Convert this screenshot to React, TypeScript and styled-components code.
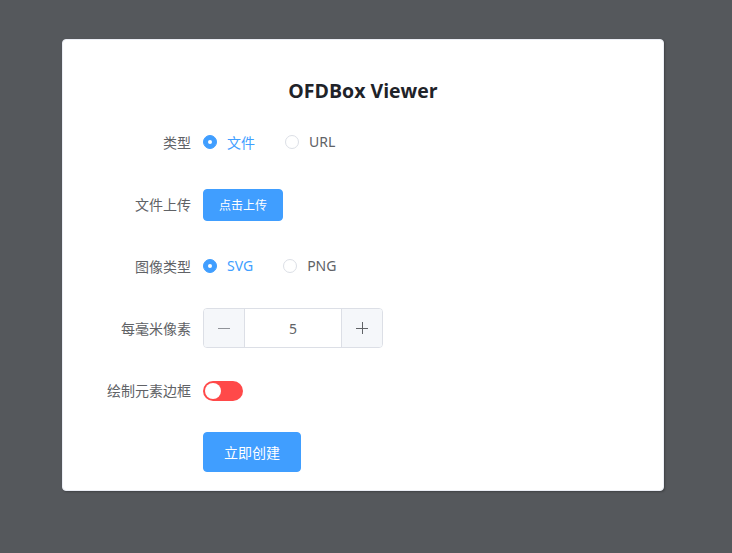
import React, { useState } from "react";
import styled, { createGlobalStyle } from "styled-components";

const Global = createGlobalStyle`
  html, body { margin: 0; padding: 0; }
  body {
    background: #55585c;
    font-family: "Noto Sans", "Noto Sans CJK SC", sans-serif;
    -webkit-font-smoothing: antialiased;
  }
`;

const Page = styled.div`
  width: 732px;
  height: 553px;
  box-sizing: border-box;
  padding: 39px 0 0 62px;
`;

const Card = styled.div`
  width: 602px;
  box-sizing: border-box;
  background: #fff;
  border-radius: 4px;
  border: 1px solid #ebeef5;
  box-shadow: 1px 1px 2px 0 rgba(0, 0, 0, 0.25);
  padding: 20px 19px 18px 19px;
`;

const Title = styled.h2`
  margin: 17px 0 17px;
  height: 28px;
  line-height: 28px;
  text-align: center;
  font-size: 19.5px;
  font-weight: 700;
  color: #1f2329;
  font-family: "Open Sans", "Noto Sans CJK SC", sans-serif;
`;

const Item = styled.div<{ $last?: boolean }>`
  display: flex;
  align-items: center;
  height: 40px;
  margin-bottom: ${(p) => (p.$last ? "0" : "22px")};
`;

const Label = styled.label`
  width: 121px;
  box-sizing: border-box;
  padding-right: 12px;
  text-align: right;
  font-size: 14px;
  color: #606266;
  font-family: "Noto Sans CJK SC", sans-serif;
  margin-top: -1px;
`;

const Content = styled.div`
  display: flex;
  align-items: center;
`;

const RadioLabel = styled.label<{ $checked: boolean }>`
  display: inline-flex;
  align-items: center;
  margin-right: 30px;
  margin-top: -1px;
  cursor: pointer;
  font-size: 14px;
  color: ${(p) => (p.$checked ? "#409eff" : "#606266")};
`;

const RadioCircle = styled.span<{ $checked: boolean }>`
  width: 14px;
  height: 14px;
  box-sizing: border-box;
  border-radius: 50%;
  border: 1px solid ${(p) => (p.$checked ? "#409eff" : "#dcdfe6")};
  background: ${(p) => (p.$checked ? "#409eff" : "#fff")};
  display: inline-flex;
  align-items: center;
  justify-content: center;
  margin-right: 10px;
  &::after {
    content: "";
    width: 4px;
    height: 4px;
    border-radius: 50%;
    background: #fff;
    display: ${(p) => (p.$checked ? "block" : "none")};
  }
`;

const RadioText = styled.span`
  font-family: "Noto Sans", "Noto Sans CJK SC", sans-serif;
`;

const Button = styled.button<{ $small?: boolean }>`
  border: 1px solid #409eff;
  background: #409eff;
  color: #fff;
  border-radius: 4px;
  font-family: "Noto Sans CJK SC", sans-serif;
  font-size: ${(p) => (p.$small ? "12px" : "14px")};
  height: ${(p) => (p.$small ? "32px" : "40px")};
  padding: ${(p) => (p.$small ? "0 15px" : "0 20px")};
  margin-top: ${(p) => (p.$small ? "1px" : "0")};
  cursor: pointer;
`;

const NumberBox = styled.div`
  width: 180px;
  height: 40px;
  box-sizing: border-box;
  border: 1px solid #dcdfe6;
  border-radius: 4px;
  display: flex;
  overflow: hidden;
`;

const StepBtn = styled.span<{ $side: "left" | "right" }>`
  width: 40px;
  flex: none;
  background: #f5f7fa;
  display: flex;
  align-items: center;
  justify-content: center;
  ${(p) =>
    p.$side === "left"
      ? "border-right: 1px solid #dcdfe6;"
      : "border-left: 1px solid #dcdfe6;"}
`;

const NumberValue = styled.span`
  flex: 1;
  display: flex;
  align-items: center;
  justify-content: center;
  font-size: 14px;
  color: #606266;
  font-family: "Noto Sans", sans-serif;
`;

const Switch = styled.span<{ $on: boolean }>`
  width: 40px;
  height: 20px;
  margin-top: 2px;
  border-radius: 10px;
  background: ${(p) => (p.$on ? "#13ce66" : "#ff4949")};
  display: flex;
  align-items: center;
  justify-content: ${(p) => (p.$on ? "flex-end" : "flex-start")};
  padding: 0 2px;
  box-sizing: border-box;
  cursor: pointer;
  &::after {
    content: "";
    width: 16px;
    height: 16px;
    border-radius: 50%;
    background: #fff;
  }
`;

function Radio({
  checked,
  label,
  onClick,
}: {
  checked: boolean;
  label: string;
  onClick: () => void;
}) {
  return (
    <RadioLabel $checked={checked} onClick={onClick}>
      <RadioCircle $checked={checked} />
      <RadioText>{label}</RadioText>
    </RadioLabel>
  );
}

export default function App() {
  const [type, setType] = useState("file");
  const [img, setImg] = useState("svg");
  const [num, setNum] = useState(5);
  const [border, setBorder] = useState(false);
  return (
    <>
      <Global />
      <Page>
        <Card>
          <Title>OFDBox Viewer</Title>
          <Item>
            <Label>类型</Label>
            <Content>
              <Radio checked={type === "file"} label="文件" onClick={() => setType("file")} />
              <Radio checked={type === "url"} label="URL" onClick={() => setType("url")} />
            </Content>
          </Item>
          <Item>
            <Label>文件上传</Label>
            <Content>
              <Button $small>点击上传</Button>
            </Content>
          </Item>
          <Item>
            <Label>图像类型</Label>
            <Content>
              <Radio checked={img === "svg"} label="SVG" onClick={() => setImg("svg")} />
              <Radio checked={img === "png"} label="PNG" onClick={() => setImg("png")} />
            </Content>
          </Item>
          <Item>
            <Label>每毫米像素</Label>
            <Content>
              <NumberBox>
                <StepBtn $side="left" onClick={() => setNum((n) => Math.max(1, n - 1))}>
                  <svg width="14" height="14" viewBox="0 0 14 14">
                    <path d="M1 7.5h12" stroke="#909399" strokeWidth="1" />
                  </svg>
                </StepBtn>
                <NumberValue>{num}</NumberValue>
                <StepBtn $side="right" onClick={() => setNum((n) => n + 1)}>
                  <svg width="14" height="14" viewBox="0 0 14 14">
                    <path d="M1 7.5h12M7.5 1v12" stroke="#606266" strokeWidth="1" />
                  </svg>
                </StepBtn>
              </NumberBox>
            </Content>
          </Item>
          <Item>
            <Label>绘制元素边框</Label>
            <Content>
              <Switch $on={border} onClick={() => setBorder((b) => !b)} />
            </Content>
          </Item>
          <Item $last>
            <Label />
            <Content>
              <Button>立即创建</Button>
            </Content>
          </Item>
        </Card>
      </Page>
    </>
  );
}
